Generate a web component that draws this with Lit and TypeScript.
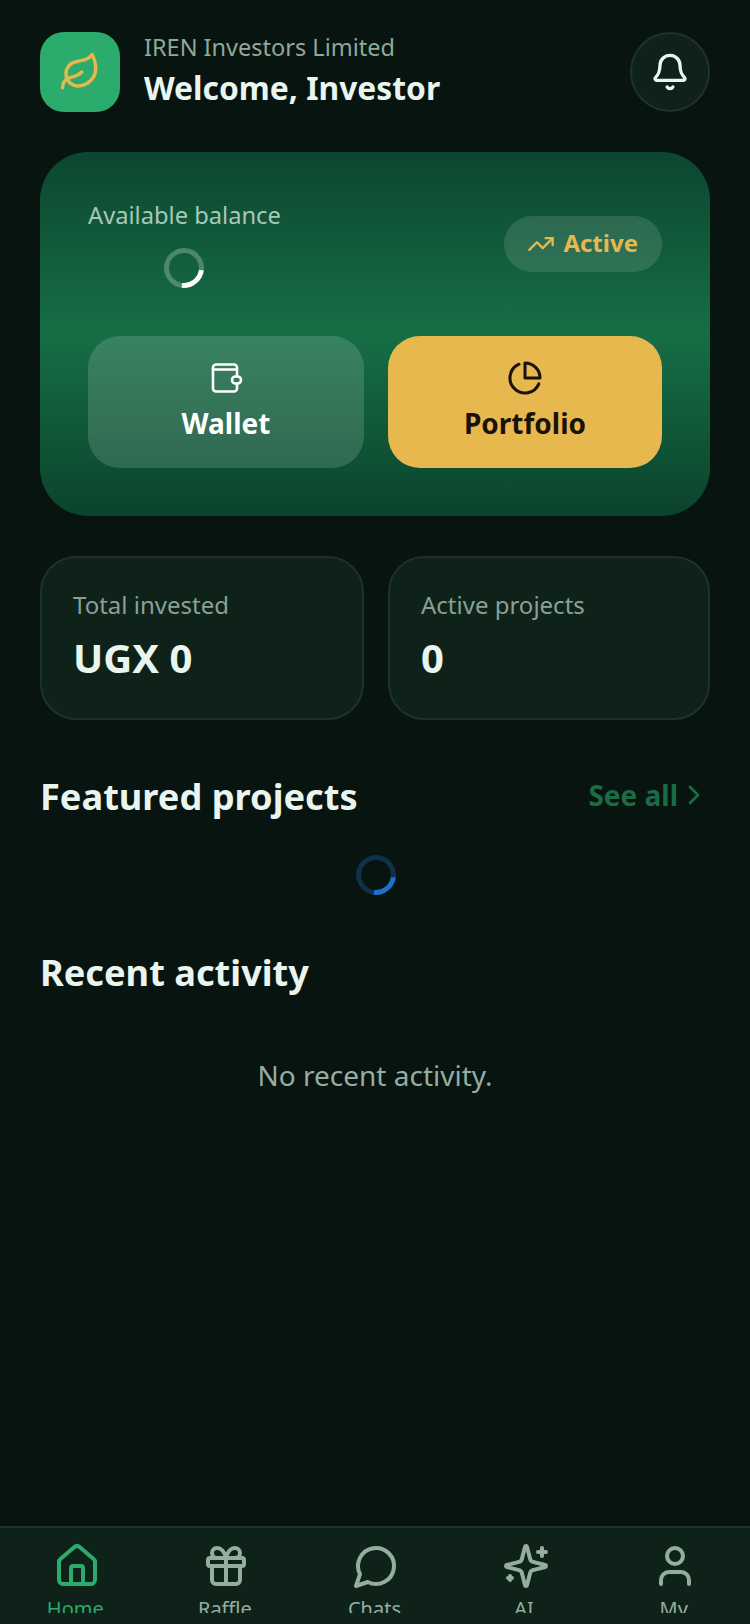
import { LitElement, html, css, svg } from "lit";
import { customElement } from "lit/decorators.js";

const icon = (size: number, body: unknown, width = 2) => html`
  <svg
    width=${size}
    height=${size}
    viewBox="0 0 24 24"
    fill="none"
    stroke="currentColor"
    stroke-width=${width}
    stroke-linecap="round"
    stroke-linejoin="round"
  >
    ${body}
  </svg>
`;

const leaf = svg`<path d="M11 20A7 7 0 0 1 9.8 6.1C15.5 5 17 4.48 19 2c1 2 2 4.18 2 8 0 5.5-4.78 10-10 10Z"/><path d="M2 21c0-3 1.85-5.36 5.08-6C9.5 14.52 12 13 13 12"/>`;
const bell = svg`<path d="M10.268 21a2 2 0 0 0 3.464 0"/><path d="M3.262 15.326A1 1 0 0 0 4 17h16a1 1 0 0 0 .74-1.673C19.41 13.956 18 12.499 18 8A6 6 0 0 0 6 8c0 4.499-1.411 5.956-2.738 7.326"/>`;
const trending = svg`<polyline points="22 7 13.5 15.5 8.5 10.5 2 17"/><polyline points="16 7 22 7 22 13"/>`;
const pie = svg`<path d="M21.21 15.89A10 10 0 1 1 8 2.83"/><path d="M22 12A10 10 0 0 0 12 2v10z"/>`;
const chevron = svg`<path d="m9 18 6-6-6-6"/>`;
const home = svg`<path d="M15 21v-8a1 1 0 0 0-1-1h-4a1 1 0 0 0-1 1v8"/><path d="M3 10a2 2 0 0 1 .709-1.528l7-5.999a2 2 0 0 1 2.582 0l7 5.999A2 2 0 0 1 21 10v9a2 2 0 0 1-2 2H5a2 2 0 0 1-2-2z"/>`;
const gift = svg`<rect x="3" y="8" width="18" height="4" rx="1"/><path d="M12 8v13"/><path d="M19 12v7a2 2 0 0 1-2 2H7a2 2 0 0 1-2-2v-7"/><path d="M7.5 8a2.5 2.5 0 0 1 0-5A4.8 8 0 0 1 12 8a4.8 8 0 0 1 4.5-5 2.5 2.5 0 0 1 0 5"/>`;
const chat = svg`<path d="M7.9 20A9 9 0 1 0 4 16.1L2 22Z"/>`;
const sparkles = svg`<path d="M9.937 15.5A2 2 0 0 0 8.5 14.063l-6.135-1.582a.5.5 0 0 1 0-.962L8.5 9.936A2 2 0 0 0 9.937 8.5l1.582-6.135a.5.5 0 0 1 .963 0L14.063 8.5A2 2 0 0 0 15.5 9.937l6.135 1.581a.5.5 0 0 1 0 .964L15.5 14.063a2 2 0 0 0-1.437 1.437l-1.582 6.135a.5.5 0 0 1-.963 0z"/><path d="M20 3v4"/><path d="M22 5h-4"/><path d="M4 17v2"/><path d="M5 18H3"/>`;
const user = svg`<path d="M19 21v-2a4 4 0 0 0-4-4H9a4 4 0 0 0-4 4v2"/><circle cx="12" cy="7" r="4"/>`;

const tabs = [
  { label: "Home", icon: home, active: true },
  { label: "Raffle", icon: gift },
  { label: "Chats", icon: chat },
  { label: "AI", icon: sparkles },
  { label: "My", icon: user },
];

@customElement("app-root")
export class AppRoot extends LitElement {
  static styles = css`
    :host {
      display: flex;
      flex-direction: column;
      width: 750px;
      height: 1624px;
      overflow: hidden;
      background: #07140f;
      color: #eaf5ef;
      font-family: "Noto Sans", "Open Sans", sans-serif;
    }
    svg {
      flex-shrink: 0;
    }
    main {
      flex: 1;
      min-height: 0;
      padding: 32px 40px 0;
    }
    .top {
      display: flex;
      align-items: center;
      gap: 24px;
      height: 80px;
    }
    .logo {
      width: 80px;
      height: 80px;
      border-radius: 24px;
      background: #2bab6c;
      color: #e6b84e;
      display: flex;
      align-items: center;
      justify-content: center;
    }
    .who {
      flex: 1;
      align-self: flex-start;
      display: flex;
      flex-direction: column;
    }
    .org {
      font-size: 23.5px;
      line-height: 30px;
      color: #8fa89c;
    }
    .hello {
      margin-top: 4px;
      font-size: 31.8px;
      line-height: 44px;
      font-weight: 700;
    }
    .bell {
      width: 80px;
      height: 80px;
      box-sizing: border-box;
      border-radius: 50%;
      background: #0f221a;
      border: 2px solid #1d332a;
      display: flex;
      align-items: center;
      justify-content: center;
    }
    .hero {
      margin-top: 40px;
      height: 364px;
      box-sizing: border-box;
      padding: 48px;
      border-radius: 48px;
      background: linear-gradient(180deg, #0c4630 0%, #166e45 50%, #0b432c 100%);
      display: flex;
      flex-direction: column;
      justify-content: space-between;
    }
    .hero-top {
      display: flex;
      justify-content: space-between;
      align-items: center;
    }
    .balance {
      display: flex;
      flex-direction: column;
      align-items: center;
      gap: 18px;
    }
    .balance span {
      font-size: 23.7px;
      line-height: 30px;
      color: #a9c7b8;
    }
    .spinner {
      width: 40px;
      height: 40px;
      box-sizing: border-box;
      border-radius: 50%;
      border: 5px solid rgba(255, 255, 255, 0.25);
      border-right-color: #fff;
      transform: rotate(52deg);
    }
    .spinner.blue {
      border-color: #103049;
      border-right-color: #1f6fd0;
    }
    .pill {
      display: flex;
      align-items: center;
      gap: 8px;
      height: 56px;
      padding: 0 24px 0 23px;
      border-radius: 28px;
      background: rgba(255, 255, 255, 0.12);
      color: #e6b84e;
      font-size: 24px;
      font-weight: 700;
    }
    .pill span {
      padding-bottom: 3px;
    }
    .actions {
      display: grid;
      grid-template-columns: 276px 274px;
      gap: 24px;
    }
    .action {
      height: 132px;
      box-sizing: border-box;
      padding-bottom: 2px;
      border-radius: 32px;
      display: flex;
      flex-direction: column;
      align-items: center;
      justify-content: center;
      gap: 8px;
      font-size: 28px;
      line-height: 38px;
      font-weight: 700;
    }
    .action.wallet {
      background: rgba(255, 255, 255, 0.15);
      color: #fff;
    }
    .action.portfolio {
      background: #e6b84e;
      color: #1a1208;
    }
    .stats {
      margin-top: 40px;
      display: grid;
      grid-template-columns: 324px 322px;
      gap: 24px;
    }
    .stat {
      height: 164px;
      box-sizing: border-box;
      padding: 31px 31px;
      border-radius: 36px;
      background: #0f221a;
      border: 2px solid #1d332a;
    }
    .stat small {
      display: block;
      font-size: 24px;
      line-height: 32px;
      color: #88a195;
    }
    .stat b {
      display: block;
      margin-top: 10px;
      font-size: 40px;
      line-height: 54px;
      font-weight: 700;
    }
    .head {
      margin-top: 51px;
      display: flex;
      justify-content: space-between;
      align-items: center;
    }
    h2 {
      margin: 0;
      font-size: 36.2px;
      line-height: 50px;
      font-weight: 700;
    }
    .more {
      display: flex;
      align-items: center;
      margin-top: -2px;
      color: #1b6b45;
      font-size: 28px;
      font-weight: 700;
    }
    .loading {
      margin-top: 34px;
      padding-left: 2px;
      display: flex;
      justify-content: center;
    }
    .recent {
      margin-top: 52px;
    }
    .empty {
      margin: 59px 0 0;
      text-align: center;
      font-size: 28px;
      line-height: 38px;
      color: #95ada2;
    }
    nav {
      height: 98px;
      box-sizing: border-box;
      padding-left: 2px;
      border-top: 2px solid #1d332a;
      background: #0f221a;
      display: grid;
      grid-template-columns: repeat(5, 1fr);
    }
    .tab {
      height: 85px;
      padding-top: 14px;
      box-sizing: border-box;
      overflow: hidden;
      display: flex;
      flex-direction: column;
      align-items: center;
      color: #93aea1;
      font-size: 20px;
      line-height: 30px;
      gap: 4px;
    }
    .tab span {
      margin-right: 3px;
    }
    .tab.on {
      color: #2bab6c;
    }
  `;

  render() {
    return html`
      <main>
        <header class="top">
          <div class="logo">${icon(42, leaf, 2)}</div>
          <div class="who">
            <span class="org">IREN Investors Limited</span>
            <span class="hello">Welcome, Investor</span>
          </div>
          <div class="bell">${icon(40, bell, 2)}</div>
        </header>

        <section class="hero">
          <div class="hero-top">
            <div class="balance">
              <span>Available balance</span>
              <div class="spinner"></div>
            </div>
            <div class="pill">${icon(28, trending)}<span>Active</span></div>
          </div>
          <div class="actions">
            <div class="action wallet">
              <svg width="36" height="36" viewBox="-2 -1.5 36 36" fill="none" stroke="currentColor" stroke-width="2.6" stroke-linecap="round" stroke-linejoin="round">
                <path d="M27 15V6a3 3 0 0 0-3-3H6a3 3 0 0 0-3 3v21a3 3 0 0 0 3 3h18a3 3 0 0 0 3-3v-5" />
                <path d="M3 8h24" />
                <rect x="22" y="15" width="9" height="7" rx="3.5" />
              </svg>
              Wallet
            </div>
            <div class="action portfolio">${icon(36, pie, 2)}Portfolio</div>
          </div>
        </section>

        <section class="stats">
          <div class="stat"><small>Total invested</small><b>UGX 0</b></div>
          <div class="stat"><small>Active projects</small><b>0</b></div>
        </section>

        <div class="head">
          <h2>Featured projects</h2>
          <span class="more">See all ${icon(32, chevron)}</span>
        </div>
        <div class="loading"><div class="spinner blue"></div></div>

        <section class="recent">
          <h2>Recent activity</h2>
          <p class="empty">No recent activity.</p>
        </section>
      </main>

      <nav>
        ${tabs.map(
          (t) => html`
            <div class="tab ${t.active ? "on" : ""}">
              ${icon(48, t.icon)}
              <span>${t.label}</span>
            </div>
          `
        )}
      </nav>
    `;
  }
}
